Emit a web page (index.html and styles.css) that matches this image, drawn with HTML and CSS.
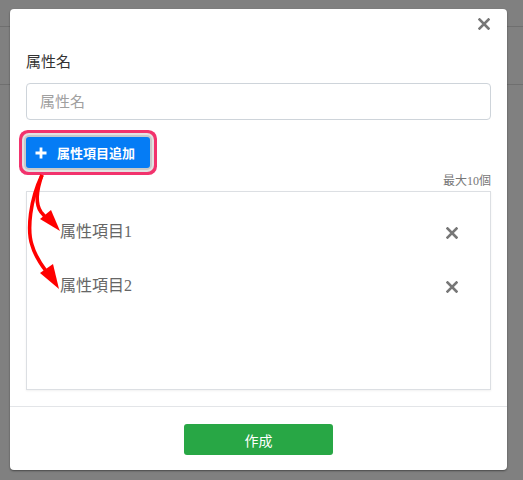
FILE: index.html
```html
<!DOCTYPE html>
<html lang="ja">
<head>
<meta charset="utf-8">
<link rel="stylesheet" href="styles.css">
</head>
<body>
<div class="modal">
  <div class="modal-header">
    <button class="close" aria-label="close">
      <svg width="12" height="12" viewBox="0 0 12 12"><path d="M1.5 1.5L10.5 10.5M10.5 1.5L1.5 10.5" stroke="#777" stroke-width="2.6" stroke-linecap="square"/></svg>
    </button>
  </div>
  <div class="modal-body">
    <label class="label">属性名</label>
    <input class="input" type="text" placeholder="属性名">
    <div class="add-row">
      <button class="btn-add">
        <svg width="12" height="12" viewBox="0 0 12 12"><path d="M6 0.5V11.5M0.5 6H11.5" stroke="#fff" stroke-width="2.8"/></svg>
        <span>属性項目追加</span>
      </button>
    </div>
    <div class="counter">最大10個</div>
    <div class="list">
      <div class="item">
        <span class="item-name">属性項目1</span>
        <svg class="item-x" width="12" height="12" viewBox="0 0 12 12"><path d="M1.5 1.5L10.5 10.5M10.5 1.5L1.5 10.5" stroke="#777" stroke-width="2.6" stroke-linecap="square"/></svg>
      </div>
      <div class="item">
        <span class="item-name">属性項目2</span>
        <svg class="item-x" width="12" height="12" viewBox="0 0 12 12"><path d="M1.5 1.5L10.5 10.5M10.5 1.5L1.5 10.5" stroke="#777" stroke-width="2.6" stroke-linecap="square"/></svg>
      </div>
    </div>
  </div>
  <div class="modal-footer">
    <button class="btn-create">作成</button>
  </div>
</div>
<svg class="arrows" width="523" height="480" viewBox="0 0 523 480">
  <path d="M42 175 C36 192 36 205 41 212 C44 216 46 218 49 220" fill="none" stroke="#f00" stroke-width="3.6"/>
  <polygon points="40,219 51,210 60,231" fill="#f00"/>
  <path d="M42 175 C30 200 27 230 32 245 C35 256 40 263 46 271" fill="none" stroke="#f00" stroke-width="3.6"/>
  <polygon points="40,273 53,264 59,289" fill="#f00"/>
</svg>
</body>
</html>
```
FILE: styles.css
```css
html, body {
  margin: 0;
  padding: 0;
}
body {
  width: 523px;
  height: 480px;
  overflow: hidden;
  background:
    linear-gradient(#6f6f6f, #6f6f6f) 0 26px / 100% 1px no-repeat,
    linear-gradient(#6f6f6f, #6f6f6f) 0 84px / 100% 1px no-repeat,
    #808080;
  font-family: "Liberation Sans", "Noto Sans CJK JP", sans-serif;
  padding-top: 9px;
  box-sizing: border-box;
  position: relative;
}
.modal {
  margin-left: 10px;
  width: 497px;
  height: 461px;
  background: #fff;
  border-radius: 4px;
  box-shadow: 0 1px 2px rgba(0,0,0,0.45);
  display: flex;
  flex-direction: column;
  box-sizing: border-box;
}
.modal-header {
  height: 30px;
  display: flex;
  justify-content: flex-end;
  align-items: center;
  padding: 0 17px 0 0;
}
.close {
  border: 0;
  background: none;
  padding: 0;
  width: 12px;
  height: 12px;
  display: flex;
  margin-top: 0;
}
.modal-body {
  padding: 0 16px 16px;
  display: flex;
  flex-direction: column;
}
.label {
  margin-top: 12px;
  line-height: 22px;
  font-size: 15px;
  color: #333;
}
.input {
  margin-top: 10px;
  height: 37px;
  box-sizing: border-box;
  border: 1px solid #ced4da;
  border-radius: 4px;
  padding: 0 13px;
  font-size: 15px;
  font-family: "Liberation Sans", "Noto Sans CJK JP", sans-serif;
  color: #333;
}
.input::placeholder {
  color: #a0a0a0;
}
.add-row {
  margin-top: 17px;
  display: flex;
}
.btn-add {
  width: 124px;
  height: 31px;
  border: 0;
  border-radius: 3px;
  background: #057cf5;
  color: #fff;
  font-size: 13px;
  font-weight: bold;
  font-family: "Liberation Sans", "Noto Sans CJK JP", sans-serif;
  display: flex;
  align-items: center;
  gap: 10px;
  padding: 0 0 0 9px;
  box-shadow: 0 0 0 2px #c9c9c9, 0 0 0 4px #e2e2e2, 0 0 0 7px #f2336d;
  border-radius: 3px;
}
.counter {
  margin-top: 5px;
  line-height: 16px;
  font-size: 12px;
  color: #777;
  text-align: right;
  font-family: "Liberation Serif", "Noto Sans CJK JP", serif;
}
.list {
  margin-top: 2px;
  height: 199px;
  box-sizing: border-box;
  border: 1px solid #dcdfe3;
  box-shadow: 0 1px 2px rgba(0,0,0,0.06);
  padding: 20px 32px 0 33px;
  display: flex;
  flex-direction: column;
  gap: 18px;
}
.item {
  height: 36px;
  display: flex;
  align-items: center;
  justify-content: space-between;
}
.item-name {
  font-size: 16px;
  color: #666;
  font-family: "Liberation Serif", "Noto Sans CJK JP", serif;
}
.item-x {
  margin-top: 6px;
}
.modal-footer {
  border-top: 1px solid #e3e5e8;
  padding: 17px 0 15px;
  display: flex;
  justify-content: center;
}
.btn-create {
  width: 149px;
  height: 31px;
  border: 0;
  border-radius: 3px;
  background: #28a745;
  color: #fff;
  font-size: 14px;
  font-family: "Liberation Sans", "Noto Sans CJK JP", sans-serif;
}
.arrows {
  position: absolute;
  left: 0;
  top: 0;
  pointer-events: none;
}
```
